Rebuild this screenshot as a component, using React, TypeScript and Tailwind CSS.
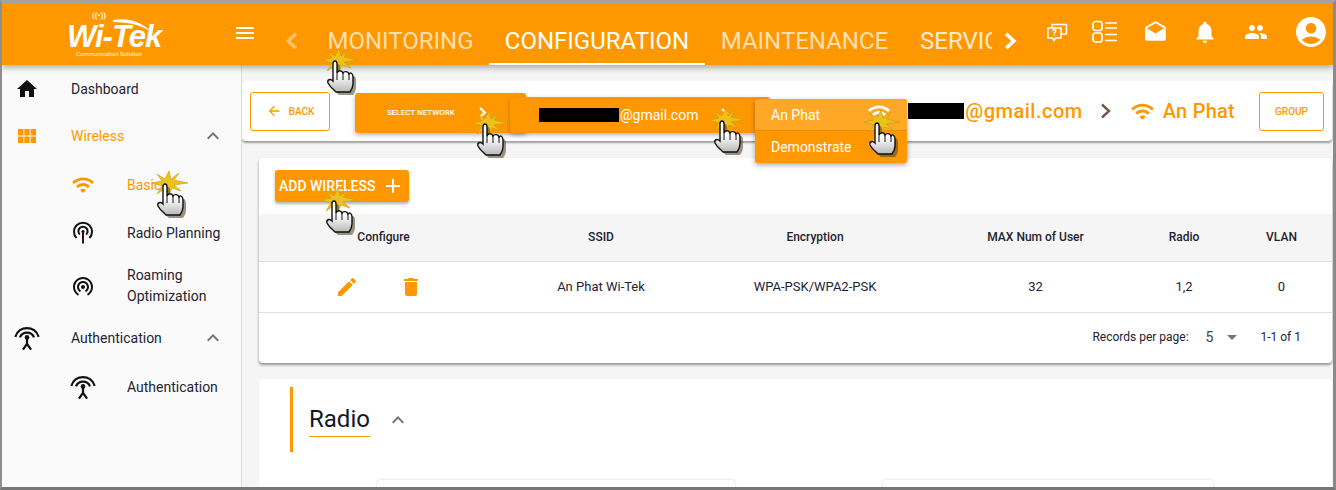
import React from "react";
import {
  MdHome, MdViewModule, MdExpandLess, MdWifi, MdEdit, MdDelete, MdArrowBack, MdAdd,
  MdNotifications, MdPeople, MdAccountCircle, MdDrafts, MdMenu, MdArrowDropDown,
  MdWifiTethering,
} from "react-icons/md";

function Hand({ x, y }: { x: number; y: number }) {
  const body = "M17 19 C17 15 21 15 21 19 L21 28 C22 25 26 25 27 28 C28 26 32 26 33 29 C34 27 37 28 37 32 L37 39 C37 42 36 44 34 47 L20 47 C17 44 14 42 12 38 C11 35 14 33 17 36 Z";
  return (
    <svg className="absolute z-30 pointer-events-none" style={{ left: x, top: y }} width="50" height="55" viewBox="0 0 50 55">
      <defs>
        <linearGradient id="handfill" x1="0" y1="0" x2="0" y2="1">
          <stop offset="0.45" stopColor="#ffffff" />
          <stop offset="1" stopColor="#b8b8b8" />
        </linearGradient>
      </defs>
      <path d="M11 6 L19 11 L23 3 L25 11 L33 5 L28 12 L42 15 L28 17 L35 23 L26 20 L23 27 L20 20 L11 26 L16 18 L6 15 L16 13 Z" fill="#ecc11c" stroke="#c99b0a" strokeWidth="0.6" />
      <path d={body} fill="#4b4220" opacity="0.55" transform="translate(3 3)" />
      <path d={body} fill="url(#handfill)" stroke="#111" strokeWidth="1.4" />
      <path d="M21 28 V35 M27 28 V35 M33 29 V35" stroke="#111" strokeWidth="1" fill="none" />
    </svg>
  );
}

function Chevron({ dir = "right", size = 14, className = "" }: { dir?: "left" | "right"; size?: number; className?: string }) {
  return (
    <svg className={className} width={size} height={size} viewBox="0 0 14 14" fill="none" stroke="currentColor" strokeWidth="2.8">
      <path d={dir === "right" ? "M4 1.5 L10 7 L4 12.5" : "M10 1.5 L4 7 L10 12.5"} />
    </svg>
  );
}

function AuthIcon() {
  return (
    <svg className="-ml-[2px] -my-[2px]" width="28" height="28" viewBox="0 0 24 24" fill="none" stroke="#111" strokeWidth="1.9">
      <path d="M2 11 C5 1 19 1 22 11" />
      <path d="M6 11.5 C8 6 16 6 18 11.5" />
      <circle cx="12" cy="11.5" r="2" fill="#111" stroke="none" />
      <path d="M12 12 V17 M12 17 L8.5 22 M12 17 L15.5 22" />
    </svg>
  );
}

function AntennaIcon() {
  return (
    <svg width="24" height="24" viewBox="0 0 24 24" fill="none" stroke="#111" strokeWidth="2">
      <path d="M5.6 17 A9 9 0 1 1 18.4 17" />
      <path d="M8.8 13.6 A4.6 4.6 0 1 1 15.2 13.6" />
      <circle cx="12" cy="10.5" r="1.6" fill="#111" stroke="none" />
      <path d="M12 11 V22.5" stroke="#3a0d0d" />
    </svg>
  );
}

function QuestionIcon() {
  return (
    <svg width="22" height="22" viewBox="0 0 22 22" fill="none" stroke="#fff" strokeWidth="1.5">
      <path d="M2 7 H15 V17 H9.5 L8 19.5 L6.5 17 H2 Z" />
      <path d="M6 7 V3.5 H20.5 V13 L15 13" />
      <text x="8.5" y="15" fill="#fff" stroke="none" fontSize="9" fontWeight="700" textAnchor="middle" fontFamily="Roboto, sans-serif">?</text>
    </svg>
  );
}

function ListIcon() {
  return (
    <svg width="26" height="24" viewBox="0 0 26 24" fill="none" stroke="#fff" strokeWidth="1.7">
      <rect x="1" y="1.5" width="9" height="9" rx="2.5" />
      <rect x="1" y="13" width="9" height="9" rx="2.5" />
      <path d="M13 3 H25 M13 8 H25 M13 14.5 H25 M13 20.5 H25" />
    </svg>
  );
}

function Logo() {
  return (
    <div className="relative w-[96px] h-[45px]">
      <span className="absolute left-[25px] -top-[1px] text-[8px] leading-[9px] font-bold text-white">((•))</span>
      <svg className="absolute left-[46px] top-[5px]" width="46" height="20" viewBox="0 0 46 20">
        <path d="M0 3 C16 0 30 5 42 18 C30 8 16 5 0 5 Z" fill="#fff" />
      </svg>
      <span className="absolute left-0 top-[12px] text-[31px] leading-[25px] font-bold italic text-white tracking-[-1px] font-['Liberation_Sans',sans-serif] whitespace-nowrap">Wi-Tek</span>
      <span className="absolute left-[9px] top-[38px] text-[6px] leading-[7px] text-white/90 whitespace-nowrap">Communication Solution</span>
    </div>
  );
}

function SideItem({ icon, label, active, chevron, className }: { icon: React.ReactNode; label: string; active?: boolean; chevron?: boolean; className: string }) {
  return (
    <div className={`flex items-center pl-[13px] pr-[16px] ${className}`}>
      <div className="w-[56px] flex items-center">{icon}</div>
      <span className={`flex-1 text-sm ${active ? "text-[#ff9800]" : "text-[#1f2330]"}`}>{label}</span>
      {chevron && <MdExpandLess size={24} className="text-[#757575]" />}
    </div>
  );
}

function SubItem({ icon, label, active, className }: { icon: React.ReactNode; label: React.ReactNode; active?: boolean; className: string }) {
  return (
    <div className={`flex items-center pl-[69px] ${className}`}>
      <div className="w-[56px] flex items-center">{icon}</div>
      <span className={`text-sm leading-[21px] ${active ? "text-[#ff9800]" : "text-[#1f2330]"}`}>{label}</span>
    </div>
  );
}

function Tab({ label, active, w }: { label: string; active?: boolean; w: string }) {
  return (
    <div className={`shrink-0 flex items-center justify-center h-full pt-[15px] text-2xl border-b-2 ${w} ${active ? "text-white border-white" : "text-white/70 border-transparent"}`}>
      {label}
    </div>
  );
}

export default function App() {
  const th = "text-xs font-medium text-[#1f2330] text-center -mt-[2px]";
  const td = "text-[13px] text-[#1f2330] text-center";
  const cols = "grid grid-cols-[251px_182px_246px_195px_102px_1fr] items-center";
  return (
    <div className="relative w-[1336px] h-[490px] overflow-hidden bg-[#f5f5f5] border-t-[3px] border-l-2 border-r-[3px] border-b-[3px] border-t-[#a3a3a3] border-l-[#8f8f8f] border-r-[#8a8a8a] border-b-[#777777] font-['Roboto',sans-serif] box-border">
      <header className="relative z-10 flex items-center h-[62px] bg-[#ff9800] shadow-[0_3px_6px_rgba(0,0,0,0.3)]">
        <div className="w-[225px] pl-[65px] shrink-0"><Logo /></div>
        <MdMenu size={24} className="text-white shrink-0 mr-[5px] -mt-[2px] ml-[6px]" />
        <div className="w-[50px] flex pl-[21px] pt-[13px] shrink-0">
          <Chevron dir="left" size={18} className="text-white/40" />
        </div>
        <div className="flex h-full w-[680px] overflow-hidden">
          <Tab label="MONITORING" w="w-[177px]" />
          <Tab label="CONFIGURATION" active w="w-[216px]" />
          <Tab label="MAINTENANCE" w="w-[199px]" />
          <div className="shrink-0 h-full w-[88px] pl-[16px] pt-[13px] text-2xl text-white/80 flex items-center overflow-hidden whitespace-nowrap">SERVICES</div>
        </div>
        <div className="w-[36px] flex justify-center shrink-0 pt-[13px]">
          <Chevron size={18} className="text-white" />
        </div>
        <div className="flex items-center ml-[18px] h-full -mt-[4px]">
          <div className="w-[22px]"><QuestionIcon /></div>
          <div className="ml-[24px]"><ListIcon /></div>
          <MdDrafts size={25} className="text-white ml-[25px]" />
          <MdNotifications size={26} className="text-white ml-[24px]" />
          <MdPeople size={24} className="text-white ml-[26px]" />
          <MdAccountCircle size={36} className="text-white ml-[25px]" />
        </div>
      </header>

      <div className="flex h-[423px]">
        <aside className="w-[240px] shrink-0 h-full bg-[#fafafa] border-r border-[#dcdcdc]">
          <SideItem className="h-[48px]" icon={<MdHome size={24} className="text-[#111]" />} label="Dashboard" />
          <SideItem className="h-[46px]" icon={<MdViewModule size={24} className="text-[#ff9800]" />} label="Wireless" active chevron />
          <SubItem className="h-[52px]" icon={<MdWifi size={24} className="text-[#ff9800]" />} label="Basic" active />
          <SubItem className="h-[44px]" icon={<AntennaIcon />} label="Radio Planning" />
          <SubItem className="h-[61px]" icon={<MdWifiTethering size={24} className="text-[#111]" />} label={<>Roaming<br />Optimization</>} />
          <SideItem className="h-[44px]" icon={<AuthIcon />} label="Authentication" chevron />
          <SubItem className="h-[54px]" icon={<AuthIcon />} label="Authentication" />
        </aside>

        <main className="flex-1 min-w-0 overflow-hidden pr-[1px]">
          <section className="mt-[16px] h-[60px] bg-white rounded-[4px] shadow-[0_2px_2px_rgba(0,0,0,0.35)] flex items-center pl-[8px] pr-[8px]">
            <button className="w-[80px] h-[39px] rounded-[3px] border border-[#ff9800] text-[#ff9800] text-[10px] font-medium flex items-center justify-center gap-[7px]">
              <MdArrowBack size={16} />BACK
            </button>
            <div className="ml-auto flex items-center h-[39px]">
              <span className="w-[56px] h-[16px] bg-black" />
              <span className="text-xl tracking-[0.5px] font-medium text-[#ff9800] ml-[1px]">@gmail.com</span>
              <svg className="ml-[16px] mr-[17px] text-[#6d5a4b]" width="14" height="16" viewBox="0 0 14 16" fill="none" stroke="currentColor" strokeWidth="2.4"><path d="M3 1.5 L10 8 L3 14.5" /></svg>
              <MdWifi size={25} className="text-[#ff9800]" />
              <span className="ml-[8px] text-xl tracking-[0.25px] font-medium text-[#ff9800]">An Phat</span>
              <button className="ml-[24px] w-[65px] h-[39px] rounded-[3px] border border-[#ff9800] text-[#ff9800] text-[10px] font-medium">GROUP</button>
            </div>
          </section>

          <section className="mt-[17px] ml-[17px] h-[205px] bg-white rounded-[4px] shadow-[0_2px_3px_rgba(0,0,0,0.4)] pt-[12px]">
            <button className="ml-[16px] w-[134px] h-[32px] rounded-[3px] bg-[#ff9800] text-white text-sm font-medium flex items-center pl-[4px] gap-[6px] shadow-[0_2px_3px_rgba(0,0,0,0.3)]">
              ADD WIRELESS <MdAdd size={24} />
            </button>
            <div className={`mt-[12px] ${cols} h-[48px] bg-[#f5f5f5] border-b border-[#e0e0e0]`}>
              <div className={`${th} pr-[2px]`}>Configure</div>
              <div className={th}>SSID</div>
              <div className={th}>Encryption</div>
              <div className={th}>MAX Num of User</div>
              <div className={th}>Radio</div>
              <div className={`${th} pr-[4px]`}>VLAN</div>
            </div>
            <div className={`${cols} h-[51px] border-b border-[#e0e0e0]`}>
              <div className="flex items-center justify-center gap-[40px] pr-[11px]">
                <MdEdit size={24} className="text-[#ff9800]" />
                <MdDelete size={24} className="text-[#ff9800]" />
              </div>
              <div className={td}>An Phat Wi-Tek</div>
              <div className={td}>WPA-PSK/WPA2-PSK</div>
              <div className={td}>32</div>
              <div className={td}>1,2</div>
              <div className={`${td} pr-[4px]`}>0</div>
            </div>
            <div className="flex items-center justify-end h-[47px] pr-[31px] text-xs text-[#1f2330]">
              <span>Records per page:</span>
              <span className="ml-[17px] text-sm text-[#444]">5</span>
              <MdArrowDropDown size={24} className="text-[#757575] ml-[7px]" />
              <span className="ml-[16px]">1-1 of 1</span>
            </div>
          </section>

          <section className="mt-[16px] ml-[17px] h-[140px] bg-white rounded-t-[4px] pt-[8px] pl-[31px] overflow-hidden">
            <div className="flex items-center h-[65px] border-l-[3px] border-[#ff9800] pl-[16px]">
              <span className="text-2xl leading-[32px] text-[#111827] border-b border-[#ff9800] pb-[1px]">Radio</span>
              <MdExpandLess size={24} className="text-[#757575] ml-[16px]" />
            </div>
            <div className="flex mt-[28px] ml-[87px]">
              <div className="w-[358px] h-[40px] bg-white rounded-[4px] shadow-[0_0_3px_rgba(0,0,0,0.18)]" />
              <div className="ml-[148px] w-[330px] h-[40px] bg-white rounded-[4px] shadow-[0_0_3px_rgba(0,0,0,0.18)]" />
            </div>
          </section>
        </main>
      </div>

      {/* floating menus opened over the page */}
      <div className="absolute z-20 left-[353px] top-[90px] w-[171px] h-[40px] rounded-[3px] bg-[#ff9800] shadow-[0_2px_4px_rgba(0,0,0,0.3)] flex items-center text-white text-[8px] font-medium pl-[32px]">
        SELECT NETWORK
        <Chevron size={11} className="ml-[22px] -mt-[1px]" />
      </div>
      <div className="absolute z-20 left-[508px] top-[94px] w-[260px] h-[36px] rounded-[3px] bg-[#ff9800] shadow-[0_2px_4px_rgba(0,0,0,0.3)] flex items-center text-white text-sm pl-[29px]">
        <span className="w-[80px] h-[14px] bg-black mr-[1px]" />@gmail.com
        <Chevron size={11} className="ml-[21px] -mt-[3px]" />
      </div>
      <div className="absolute z-20 left-[753px] top-[96px] w-[152px] h-[64px] rounded-[3px] overflow-hidden bg-[#ff9800] shadow-[0_2px_5px_rgba(0,0,0,0.35)] text-white text-sm">
        <div className="flex items-center justify-between h-[32px] bg-[#ffa726] border-b border-[#f08c00] pl-[16px] pr-[16px]">
          An Phat <MdWifi size={24} className="-mt-[4px]" />
        </div>
        <div className="flex items-center justify-between h-[32px] pl-[16px] pr-[16px]">
          Demonstrate <MdWifi size={24} />
        </div>
      </div>

      <Hand x={314} y={42} />
      <Hand x={464} y={105} />
      <Hand x={701} y={102} />
      <Hand x={856} y={104} />
      <Hand x={144} y={165} />
      <Hand x={313} y={182} />
    </div>
  );
}
